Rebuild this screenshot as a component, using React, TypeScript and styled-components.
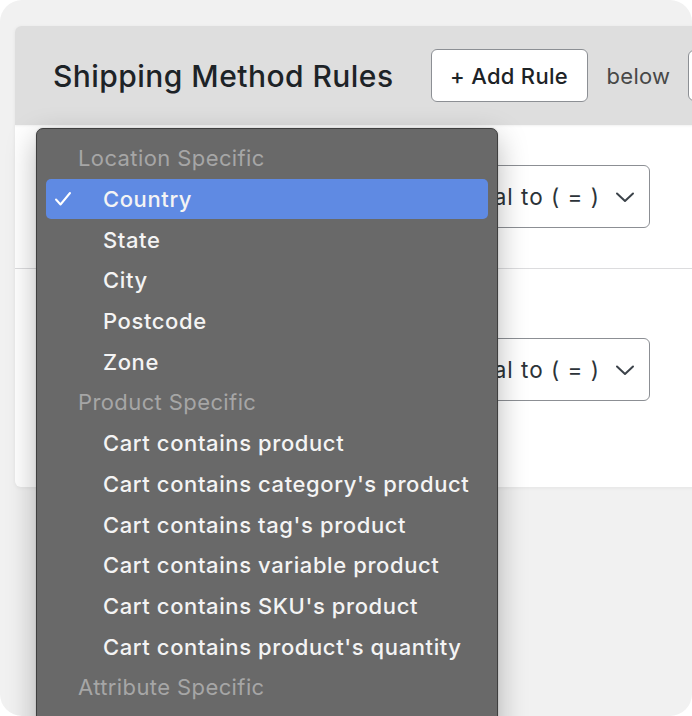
import React from 'react'
import styled, { createGlobalStyle } from 'styled-components'

const GlobalStyle = createGlobalStyle`
  html, body {
    margin: 0;
    padding: 0;
    background: #ffffff;
  }
  body {
    font-family: Inter, "Noto Sans", "DejaVu Sans", sans-serif;
  }
`

interface MenuEntry {
  label: string
  group?: boolean
  selected?: boolean
}

const entries: MenuEntry[] = [
  { label: 'Location Specific', group: true },
  { label: 'Country', selected: true },
  { label: 'State' },
  { label: 'City' },
  { label: 'Postcode' },
  { label: 'Zone' },
  { label: 'Product Specific', group: true },
  { label: 'Cart contains product' },
  { label: "Cart contains category's product" },
  { label: "Cart contains tag's product" },
  { label: 'Cart contains variable product' },
  { label: "Cart contains SKU's product" },
  { label: "Cart contains product's quantity" },
  { label: 'Attribute Specific', group: true },
]

const Chevron: React.FC = () => (
  <svg width="22" height="14" viewBox="0 0 22 14" fill="none">
    <path
      d="M3 3.5l8 7.5 8-7.5"
      stroke="#3c434a"
      strokeWidth="2"
      strokeLinecap="round"
      strokeLinejoin="round"
    />
  </svg>
)

const Check: React.FC = () => (
  <svg width="18" height="16" viewBox="0 0 18 16" fill="none">
    <path
      d="M2 8.5l4.5 5L16 2"
      stroke="#ffffff"
      strokeWidth="2"
      strokeLinecap="round"
      strokeLinejoin="round"
    />
  </svg>
)

const App: React.FC = () => (
  <>
    <GlobalStyle />
    <Frame>
      <Card>
        <CardHeader>
          <Title>Shipping Method Rules</Title>
          <AddButton>+ Add Rule</AddButton>
          <Muted>below</Muted>
          <PositionSelect />
        </CardHeader>
        <CardBody>
          <RuleRow top={40} bottom={40}>
            <FieldSelect />
            <OperatorSelect>
              <span>Equal to ( = )</span>
              <Chevron />
            </OperatorSelect>
          </RuleRow>
          <RuleRow top={69} bottom={86} last>
            <FieldSelect />
            <OperatorSelect>
              <span>Equal to ( = )</span>
              <Chevron />
            </OperatorSelect>
          </RuleRow>
        </CardBody>
      </Card>

      <Menu>
        {entries.map((e) =>
          e.group ? (
            <GroupLabel key={e.label}>{e.label}</GroupLabel>
          ) : (
            <Item key={e.label} selected={e.selected}>
              <CheckSlot>{e.selected && <Check />}</CheckSlot>
              {e.label}
            </Item>
          )
        )}
      </Menu>
    </Frame>
  </>
)

export default App

const Frame = styled.div`
  position: relative;
  width: 692px;
  height: 716px;
  box-sizing: border-box;
  padding: 26px 0 0 15px;
  background: #f1f1f1;
  border-radius: 22px;
  overflow: hidden;
`

const Card = styled.div`
  width: 780px;
  background: #ffffff;
  border-radius: 6px;
  overflow: hidden;
  box-shadow: 0 1px 4px rgba(0, 0, 0, 0.06);
`

const CardHeader = styled.div`
  display: flex;
  align-items: center;
  height: 99px;
  padding-left: 38px;
  background: #dedede;
  box-shadow: 0 1px 2px rgba(0, 0, 0, 0.06);
  position: relative;

  & > * {
    flex-shrink: 0;
  }
`

const Title = styled.h2`
  margin: 0 37px 0 0;
  font-size: 30px;
  font-weight: 500;
  color: #1d2327;
  letter-spacing: 0.45px;
  white-space: nowrap;
`

const AddButton = styled.button`
  height: 53px;
  width: 157px;
  margin-right: 19px;
  border: 1px solid #8c8f94;
  border-radius: 6px;
  background: #ffffff;
  font-family: inherit;
  font-size: 22px;
  font-weight: 500;
  letter-spacing: 0.3px;
  color: #1d2327;
`

const Muted = styled.span`
  font-size: 22px;
  color: #484848;
  letter-spacing: 0.3px;
  margin-right: 18px;
`

const PositionSelect = styled.div`
  height: 51px;
  width: 120px;
  border: 1px solid #8c8f94;
  border-radius: 6px;
  background: #ffffff;
  box-sizing: border-box;
`

const CardBody = styled.div`
  display: flex;
  flex-direction: column;
`

const RuleRow = styled.div<{ top: number; bottom: number; last?: boolean }>`
  display: flex;
  align-items: center;
  gap: 20px;
  padding: ${(p) => p.top}px 0 ${(p) => p.bottom}px 40px;
  border-bottom: ${(p) => (p.last ? 'none' : '1px solid #dcdcde')};
`

const FieldSelect = styled.div`
  width: 355px;
  height: 63px;
  box-sizing: border-box;
  border: 1px solid #8c8f94;
  border-radius: 6px;
`

const OperatorSelect = styled.div`
  display: flex;
  align-items: center;
  justify-content: flex-end;
  gap: 14px;
  width: 220px;
  height: 63px;
  box-sizing: border-box;
  padding: 0 13px 0 14px;
  border: 1px solid #8c8f94;
  border-radius: 6px;
  background: #ffffff;
  font-size: 22.5px;
  letter-spacing: 1px;
  color: #2c3338;
  white-space: nowrap;
  overflow: hidden;
`

const Menu = styled.div`
  position: absolute;
  left: 36px;
  top: 128px;
  width: 462px;
  height: 640px;
  box-sizing: border-box;
  padding: 9px 9px;
  background: #696969;
  border: 1px solid #3f3f3f;
  border-radius: 7px;
  box-shadow: 0 10px 30px rgba(0, 0, 0, 0.28), 0 0 2px rgba(0, 0, 0, 0.2);
`

const GroupLabel = styled.div`
  height: 40.7px;
  line-height: 40.7px;
  padding-left: 32px;
  font-size: 22px;
  letter-spacing: 0.4px;
  color: #a6a6a6;
  white-space: nowrap;
`

const Item = styled.div<{ selected?: boolean }>`
  display: flex;
  align-items: center;
  height: 40.7px;
  padding-left: 8px;
  border-radius: 5px;
  background: ${(p) => (p.selected ? '#5f8ae3' : 'transparent')};
  font-size: 22px;
  font-weight: 500;
  letter-spacing: 0.6px;
  color: #f4f4f4;
  white-space: nowrap;
`

const CheckSlot = styled.span`
  display: inline-flex;
  width: 49px;
  align-items: center;
`
